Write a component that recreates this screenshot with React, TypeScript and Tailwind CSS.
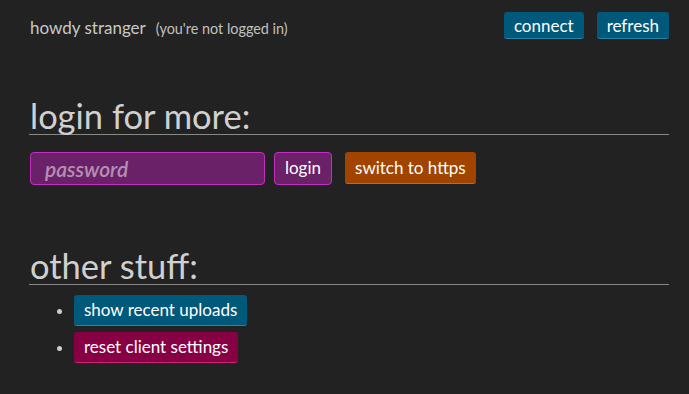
export default function App() {
  return (
    <div className="min-h-screen bg-[#222222] text-[#cccccc] pl-[30px] pr-[20px] pt-[12px]" style={{ fontFamily: 'Lato, "Noto Sans", sans-serif' }}>
      <div className="flex items-start justify-between">
        <div className="flex items-baseline pt-[3px]">
          <span className="text-[17px] text-[#c8c8c8]">howdy stranger</span>
          <span className="text-[14.4px] text-[#c0c0c0] ml-[10px]">(you're not logged in)</span>
        </div>
        <div className="flex gap-[13px]">
          <button className="h-[27px] px-[10px] text-[17px] text-white bg-[#00587a] border-b border-[#2a84a8] rounded-[3px] leading-none">connect</button>
          <button className="h-[27px] px-[10px] text-[17px] text-white bg-[#00587a] border-b border-[#2a84a8] rounded-[3px] leading-none">refresh</button>
        </div>
      </div>

      <h1 className="mt-[57px] text-[34.5px] leading-[36px] text-[#d0d0d0] border-b border-[#888888] -ml-px pl-px">login for more:</h1>
      <div className="flex items-center mt-[17px] gap-[9px]">
        <input
          placeholder="password"
          className="w-[235px] h-[33px] px-[14px] text-[21px] font-semibold italic bg-[#6a2168] border border-[#c42ec4] rounded-[4px] text-white placeholder:text-[#b390b3] outline-none"
        />
        <button className="h-[33px] px-[10px] text-[17px] text-white bg-[#6a2168] border border-[#c42ec4] rounded-[4px]">login</button>
        <button className="ml-[4px] h-[32px] px-[10px] text-[17px] text-white bg-[#a04400] border-b border-[#cc6a00] rounded-[3px]">switch to https</button>
      </div>

      <h1 className="mt-[63px] text-[34.5px] leading-[36px] text-[#d0d0d0] border-b border-[#888888] -ml-px pl-px">other stuff:</h1>
      <ul className="mt-[10px] pl-[44px] list-disc marker:text-[#cccccc] flex flex-col gap-[6px]">
        <li>
          <button className="h-[31px] px-[10px] text-[17px] text-white bg-[#00587a] border-b border-[#2a84a8] rounded-[3px]">show recent uploads</button>
        </li>
        <li>
          <button className="h-[31px] px-[10px] text-[17px] text-white bg-[#880044] border-b border-[#cc2277] rounded-[3px]">reset client settings</button>
        </li>
      </ul>
    </div>
  )
}
